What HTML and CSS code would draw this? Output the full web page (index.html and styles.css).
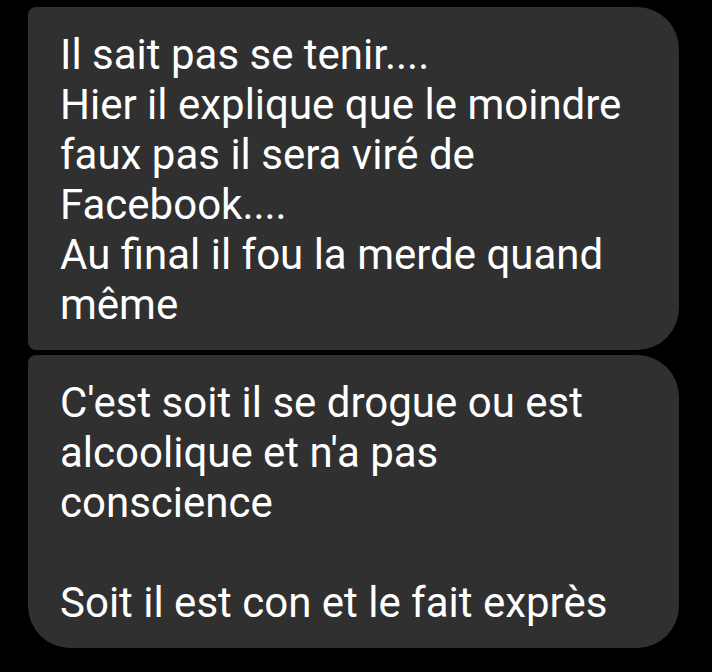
FILE: index.html
```html
<!DOCTYPE html>
<html lang="fr">
<head>
  <meta charset="UTF-8">
  <meta name="viewport" content="width=device-width, initial-scale=1.0">
  <link rel="stylesheet" href="styles.css">
  <title>Messages</title>
</head>
<body>
  <div class="thread">
    <div class="bubble bubble--first">
      <p class="bubble__text">Il sait pas se tenir....<br>Hier il explique que le moindre<br>faux pas il sera viré de<br>Facebook....<br>Au final il fou la merde quand<br>même</p>
    </div>
    <div class="bubble bubble--last">
      <p class="bubble__text">C'est soit il se drogue ou est<br>alcoolique et n'a pas<br>conscience<br><br>Soit il est con et le fait exprès</p>
    </div>
  </div>
</body>
</html>
```

FILE: styles.css
```css
body {
margin: 0;
background: #000;
font-family: Roboto, "Liberation Sans", sans-serif;
}

.thread {
display: flex;
flex-direction: column;
gap: 5px;
padding: 7px 0 0 28px;
}

.bubble {
width: 651px;
box-sizing: border-box;
background: #303030;
padding: 23px 32px 20px;
}

.bubble--first {
border-radius: 8px 42px 42px 8px;
}

.bubble--last {
border-radius: 8px 42px 42px 42px;
}

.bubble__text {
margin: 0;
color: #fff;
font-size: 42px;
line-height: 50px;
}
```
